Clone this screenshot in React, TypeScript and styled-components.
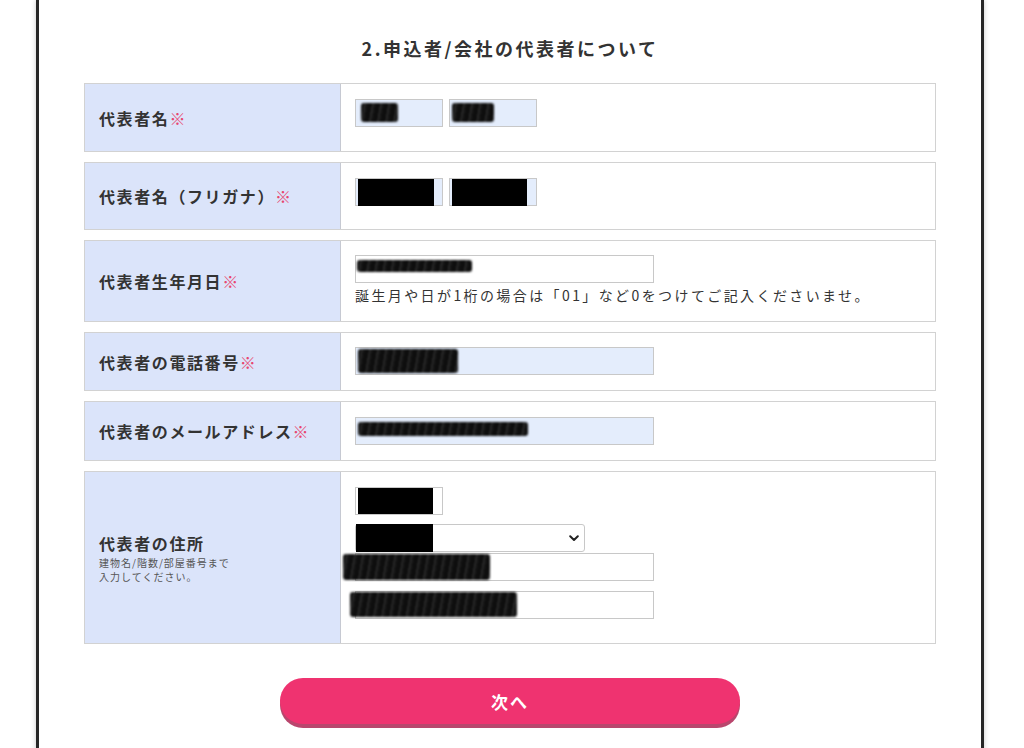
import styled, { createGlobalStyle } from "styled-components";

const GlobalStyle = createGlobalStyle`
  body {
    margin: 0;
    background: #fff;
    font-family: "Noto Sans CJK JP", "Noto Sans", sans-serif;
    color: #333;
  }
`;

type Mark = { left: number; top: number; width: number; height: number; solid?: boolean };

export default function App() {
  return (
    <>
      <GlobalStyle />
      <Frame>
        <Title>2.申込者/会社の代表者について</Title>
        <Table>
          <Row>
            <Label>
              <LabelText>
                代表者名<Req>※</Req>
              </LabelText>
            </Label>
            <Value $bottom={24}>
              <Inline>
                <Field width={88} blue mark={{ left: 6, top: 4, width: 37, height: 19 }} />
                <Field width={88} blue mark={{ left: 3, top: 4, width: 42, height: 19 }} />
              </Inline>
            </Value>
          </Row>
          <Row>
            <Label>
              <LabelText>
                代表者名（フリガナ）<Req>※</Req>
              </LabelText>
            </Label>
            <Value $bottom={23}>
              <Inline>
                <Field width={88} blue mark={{ left: 3, top: 1, width: 76, height: 27, solid: true }} />
                <Field width={88} blue mark={{ left: 3, top: 1, width: 75, height: 27, solid: true }} />
              </Inline>
            </Value>
          </Row>
          <Row>
            <Label>
              <LabelText>
                代表者生年月日<Req>※</Req>
              </LabelText>
            </Label>
            <Value $top={14} $bottom={14}>
              <Field width={299} mark={{ left: 2, top: 5, width: 115, height: 12 }} />
              <Help>誕生月や日が1桁の場合は「01」など0をつけてご記入くださいませ。</Help>
            </Value>
          </Row>
          <Row>
            <Label>
              <LabelText>
                代表者の電話番号<Req>※</Req>
              </LabelText>
            </Label>
            <Value $top={14} $bottom={15}>
              <Field width={299} blue mark={{ left: 3, top: 2, width: 100, height: 24 }} />
            </Value>
          </Row>
          <Row>
            <Label>
              <LabelText>
                代表者のメールアドレス<Req>※</Req>
              </LabelText>
            </Label>
            <Value $top={15} $bottom={15}>
              <Field width={299} blue mark={{ left: 3, top: 5, width: 170, height: 14 }} />
            </Value>
          </Row>
          <Row>
            <Label>
              <LabelText>代表者の住所</LabelText>
              <Note>
                建物名/階数/部屋番号まで
                <br />
                入力してください。
              </Note>
            </Label>
            <Value $bottom={24}>
              <Stack>
                <Field width={88} mark={{ left: 3, top: 1, width: 75, height: 26, solid: true }} />
                <SelectWrap $gap={9}>
                  <Select defaultValue="">
                    <option value=""></option>
                  </Select>
                  <Chevron viewBox="0 0 10 7">
                    <path d="M1.2 1.3 L5 5 L8.8 1.3" fill="none" stroke="#222" strokeWidth="2" strokeLinecap="round" strokeLinejoin="round" />
                  </Chevron>
                  <Redact $solid $left={1} $top={0} $width={77} $height={28} />
                </SelectWrap>
                <Spaced $gap={1}>
                  <Field width={299} mark={{ left: -12, top: 1, width: 147, height: 26 }} />
                </Spaced>
                <Spaced $gap={10}>
                  <Field width={299} mark={{ left: -5, top: 1, width: 167, height: 25 }} />
                </Spaced>
              </Stack>
            </Value>
          </Row>
        </Table>
        <Actions>
          <NextButton type="button">次へ</NextButton>
        </Actions>
      </Frame>
    </>
  );
}

function Field({ width, blue, mark }: { width: number; blue?: boolean; mark?: Mark }) {
  return (
    <FieldWrap $width={width}>
      <TextInput $blue={blue} readOnly />
      {mark && (
        <Redact
          $solid={mark.solid}
          $left={mark.left}
          $top={mark.top}
          $width={mark.width}
          $height={mark.height}
        />
      )}
    </FieldWrap>
  );
}

const Frame = styled.div`
  box-sizing: border-box;
  width: 948px;
  min-height: 748px;
  margin-left: 36px;
  padding: 36px 45px 40px;
  background: #fff;
  border-left: 3px solid #262626;
  border-right: 3px solid #262626;
  box-shadow: 0 0 5px rgba(0, 0, 0, 0.22);
`;

const Title = styled.h2`
  margin: 0 0 23px;
  text-align: center;
  font-size: 18px;
  line-height: 24px;
  font-weight: 700;
  letter-spacing: 2.5px;
  color: #333;
`;

const Table = styled.div`
  display: flex;
  flex-direction: column;
  gap: 10px;
`;

const Row = styled.div`
  display: flex;
  border: 1px solid #d2d2d2;
`;

const Label = styled.div`
  box-sizing: border-box;
  width: 256px;
  flex-shrink: 0;
  padding-left: 14px;
  background: #dbe4fa;
  border-right: 1px solid #c6c9d2;
  display: flex;
  flex-direction: column;
  justify-content: center;
`;

const LabelText = styled.div`
  font-size: 16px;
  line-height: 22px;
  font-weight: 700;
  letter-spacing: 1.6px;
  color: #333;
`;

const Req = styled.span`
  color: #e8466f;
  font-weight: 400;
`;

const Note = styled.div`
  margin-top: 2px;
  font-size: 10px;
  line-height: 14px;
  letter-spacing: 1px;
  color: #555;
`;

const Value = styled.div<{ $top?: number; $bottom?: number }>`
  flex: 1;
  padding: ${(p) => p.$top ?? 15}px 14px ${(p) => p.$bottom ?? 14}px;
  background: #fff;
`;

const Inline = styled.div`
  display: flex;
  gap: 6px;
`;

const Stack = styled.div`
  display: flex;
  flex-direction: column;
  align-items: flex-start;
`;

const Spaced = styled.div<{ $gap: number }>`
  margin-top: ${(p) => p.$gap}px;
`;

const FieldWrap = styled.div<{ $width: number }>`
  position: relative;
  width: ${(p) => p.$width}px;
  height: 28px;
`;

const TextInput = styled.input<{ $blue?: boolean }>`
  box-sizing: border-box;
  display: block;
  width: 100%;
  height: 100%;
  margin: 0;
  padding: 0 6px;
  border: 1px solid #c8c8c8;
  border-radius: 0;
  background: ${(p) => (p.$blue ? "#e4edfc" : "#fff")};
  font: inherit;
  outline: none;
`;

const Redact = styled.div<{ $solid?: boolean; $left: number; $top: number; $width: number; $height: number }>`
  position: absolute;
  left: ${(p) => p.$left}px;
  top: ${(p) => p.$top}px;
  width: ${(p) => p.$width}px;
  height: ${(p) => p.$height}px;
  background: ${(p) =>
    p.$solid
      ? "#000"
      : "repeating-linear-gradient(100deg, #0c0c0c 0 3px, #2a2a2a 3px 5px, #111 5px 8px)"};
  border-radius: ${(p) => (p.$solid ? 0 : 3)}px;
  filter: ${(p) => (p.$solid ? "none" : "blur(1.3px)")};
  pointer-events: none;
`;

const Help = styled.div`
  font-size: 14px;
  line-height: 24px;
  letter-spacing: 2.4px;
  color: #333;
`;

const SelectWrap = styled.div<{ $gap: number }>`
  position: relative;
  width: 230px;
  height: 28px;
  margin-top: ${(p) => p.$gap}px;
`;

const Select = styled.select`
  box-sizing: border-box;
  width: 100%;
  height: 100%;
  margin: 0;
  padding: 0 24px 0 6px;
  appearance: none;
  border: 1px solid #c8c8c8;
  border-radius: 3px;
  background: #fff;
  font: inherit;
  outline: none;
`;

const Chevron = styled.svg`
  position: absolute;
  right: 6px;
  top: 11px;
  width: 10px;
  height: 7px;
  pointer-events: none;
`;

const Actions = styled.div`
  display: flex;
  justify-content: center;
  margin-top: 34px;
`;

const NextButton = styled.button`
  width: 460px;
  height: 46px;
  border: none;
  border-radius: 23px;
  background: #ef3370;
  box-shadow: 0 4px 0 #b9466d;
  color: #fff;
  font-family: "Noto Sans CJK JP", "Noto Sans", sans-serif;
  font-size: 17px;
  font-weight: 700;
  letter-spacing: 2px;
  cursor: pointer;
`;
